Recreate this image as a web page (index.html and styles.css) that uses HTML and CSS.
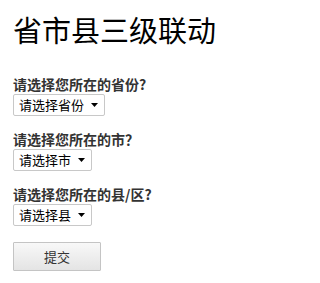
FILE: index.html
```html
<!DOCTYPE html>
<html lang="zh-CN">
<head>
<meta charset="utf-8">
<title>省市县三级联动</title>
<link rel="stylesheet" href="styles.css">
</head>
<body>
<div class="page">
  <h1 class="title">省市县三级联动</h1>
  <form class="form">
    <div class="field">
      <label class="label" for="prov">请选择您所在的省份?</label>
      <div class="select-wrap">
        <select id="prov" class="select"><option>请选择省份</option></select>
        <svg class="caret" width="7" height="4" viewBox="0 0 7 4"><path d="M0 0H7L3.5 4Z" fill="#000"/></svg>
      </div>
    </div>
    <div class="field">
      <label class="label" for="city">请选择您所在的市？</label>
      <div class="select-wrap">
        <select id="city" class="select"><option>请选择市</option></select>
        <svg class="caret" width="7" height="4" viewBox="0 0 7 4"><path d="M0 0H7L3.5 4Z" fill="#000"/></svg>
      </div>
    </div>
    <div class="field">
      <label class="label" for="county">请选择您所在的县/区?</label>
      <div class="select-wrap">
        <select id="county" class="select"><option>请选择县</option></select>
        <svg class="caret" width="7" height="4" viewBox="0 0 7 4"><path d="M0 0H7L3.5 4Z" fill="#000"/></svg>
      </div>
    </div>
    <div class="actions">
      <button type="button" class="btn">提交</button>
    </div>
  </form>
</div>
</body>
</html>
```
FILE: styles.css
```css
html, body {
  margin: 0;
  padding: 0;
  background: #fff;
}
.page {
  padding: 15px 13px;
  font-family: "Noto Sans CJK SC", "Liberation Sans", sans-serif;
}
.title {
  margin: 0;
  font-size: 29px;
  line-height: 28px;
  font-weight: 400;
  color: #000;
}
.form {
  margin-top: 33px;
  display: flex;
  flex-direction: column;
  gap: 15px;
}
.field {
  display: flex;
  flex-direction: column;
  align-items: flex-start;
  gap: 2px;
}
.label {
  font-size: 14px;
  line-height: 16px;
  font-weight: 700;
  color: #333;
}
.select-wrap {
  position: relative;
  display: inline-flex;
}
.select {
  -webkit-appearance: none;
  appearance: none;
  margin: 0;
  height: 22px;
  padding: 0 19px 0 5px;
  border: 1px solid #c8c8c8;
  border-radius: 2px;
  background: #fff;
  color: #000;
  font-family: "Noto Sans CJK SC", "Liberation Sans", sans-serif;
  font-size: 13px;
  line-height: 20px;
  outline: none;
}
.caret {
  position: absolute;
  right: 7px;
  top: 9px;
  pointer-events: none;
}
.actions {
  padding-top: 1px;
}
.btn {
  width: 88px;
  height: 29px;
  margin: 0;
  padding: 0;
  border: 1px solid #c4c4c4;
  border-radius: 1px;
  background: linear-gradient(#f8f8f8, #e4e4e4);
  color: #333;
  font-family: "Noto Sans CJK SC", "Liberation Sans", sans-serif;
  font-size: 13px;
  cursor: pointer;
}
```
